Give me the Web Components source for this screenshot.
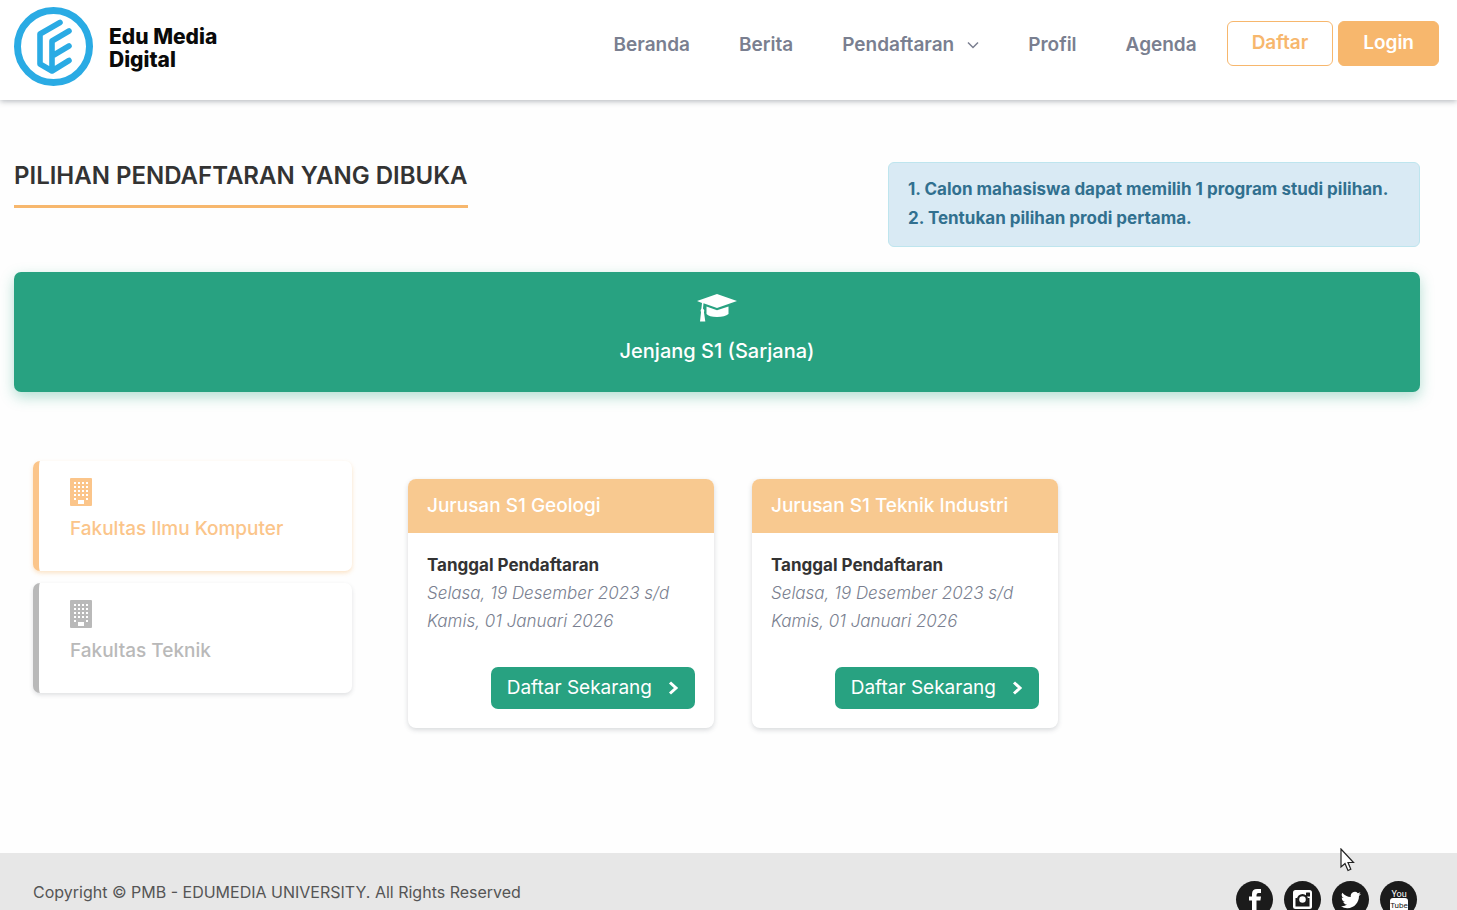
<!DOCTYPE html>
<html lang="id">
<head>
<meta charset="utf-8">
<meta name="viewport" content="width=device-width, initial-scale=1">
<title>Pilihan Pendaftaran - Edu Media Digital</title>
<style>
  :root {
    --orange: #f7b76d;
    --orange-soft: #f8c990;
    --green: #28a281;
    --ink: #333333;
    --muted: #7a7f90;
  }
  body {
    margin: 0;
    background: #fefefe;
    color: var(--ink);
    font-family: Inter, "Open Sans", sans-serif;
    font-size: 16px;
    line-height: 28px;
  }
</style>
</head>
<body>
<pmb-page></pmb-page>

<script>
const define = (name, html) => {
  const template = document.createElement('template');
  template.innerHTML = html;
  customElements.define(name, class extends HTMLElement {
    constructor() {
      super();
      this.attachShadow({ mode: 'open' }).append(template.content.cloneNode(true));
    }
  });
};

define('pmb-logo', `
<style>
  :host { display: block; }
  a { display: flex; align-items: center; gap: 16px; color: #0a0a0a; text-decoration: none; }
  svg { display: block; }
  span { padding-top: 2px; font-size: 21px; font-weight: 800; line-height: 23px; }
</style>
<a href="#">
  <svg width="79" height="79" viewBox="0 0 79 79" fill="none" stroke="#2aabe4" stroke-linecap="round" stroke-linejoin="round" aria-hidden="true">
    <circle cx="39.5" cy="39.5" r="36" stroke-width="7"/>
    <path d="M46 15.500 26 27V57L38 64 55 53.500M55 24 38 34V62M55 39 39 48.500" stroke-width="5.600"/>
  </svg>
  <span>Edu Media<br>Digital</span>
</a>`);

define('nav-link', `
<style>
  :host { display: block; }
  a { display: flex; align-items: center; gap: 13px; color: var(--muted); font-size: 19px; font-weight: 600; text-decoration: none; }
</style>
<a href="#"><slot></slot><slot name="icon"></slot></a>`);

define('auth-link', `
<style>
  :host { display: block; }
  a { display: block; box-sizing: border-box; height: 45px; padding: 0 24px; border: 1px solid var(--orange); border-radius: 6px; font-size: 19px; font-weight: 600; line-height: 42px; text-decoration: none; color: var(--orange); }
  :host([filled]) a { background: var(--orange); color: #fff; }
</style>
<a href="#"><slot></slot></a>`);

define('pmb-header', `
<style>
  :host { display: block; background: #fff; box-shadow: 0 1px 6px rgba(50, 60, 75, .4); }
  header { display: flex; justify-content: space-between; align-items: flex-start; box-sizing: border-box; height: 100px; padding: 7px 18px 0 14px; }
  .right { display: flex; align-items: center; gap: 30px; padding-top: 14px; }
  nav { display: flex; gap: 49px; padding-top: 2px; }
  .auth { display: flex; gap: 5px; }
</style>
<header>
  <pmb-logo></pmb-logo>
  <div class="right">
    <nav aria-label="Utama">
      <nav-link>Beranda</nav-link>
      <nav-link>Berita</nav-link>
      <nav-link>Pendaftaran
        <svg slot="icon" width="12" height="8" viewBox="0 0 12 8" fill="none" stroke="currentColor" stroke-width="1.500" aria-hidden="true"><path d="M1 1.500 6 6.500 11 1.500"/></svg>
      </nav-link>
      <nav-link>Profil</nav-link>
      <nav-link>Agenda</nav-link>
    </nav>
    <div class="auth">
      <auth-link>Daftar</auth-link>
      <auth-link filled>Login</auth-link>
    </div>
  </div>
</header>`);

define('notice-box', `
<style>
  :host { display: block; box-sizing: border-box; min-width: 532px; padding: 12px 19px 13px; border: 1px solid #bee5ee; border-radius: 6px; background: #d9eaf4; color: #31708f; font-size: 17px; font-weight: 700; line-height: 29px; }
</style>
<slot></slot>`);

define('level-banner', `
<style>
  :host { display: block; }
  button { display: flex; flex-direction: column; align-items: center; gap: 15px; box-sizing: border-box; width: 100%; height: 120px; padding: 22px 0 0; border: 0; border-radius: 7px; background: var(--green); box-shadow: 0 5px 14px rgba(40, 162, 129, .35); color: #fff; font: 500 20px/28px Inter, "Open Sans", sans-serif; }
</style>
<button type="button">
  <svg width="40" height="28" viewBox="0 0 40 28" fill="currentColor" aria-hidden="true">
    <path d="M20 0 40 7 20 14 6.500 9.300 6 14.500Q8 16 7 18.500L8.300 27.500H3L4 18.500Q3 16 4.400 14.500L5 9 0 7Z"/>
    <path d="M9.500 12.600 20 16.200 31.500 12.600V20Q28 23 20 23T9.500 20Z"/>
  </svg>
  <span><slot></slot></span>
</button>`);

define('faculty-card', `
<style>
  :host { display: block; --tone: #b9b9b9; --glow: rgba(60, 70, 80, .16); }
  :host([active]) { --tone: #fbc58a; --glow: rgba(247, 183, 109, .38); }
  button { display: flex; flex-direction: column; align-items: flex-start; gap: 9px; box-sizing: border-box; width: 100%; height: 110px; padding: 17px 16px 0 31px; border: 0; border-left: 6px solid var(--tone); border-radius: 7px; background: #fff; box-shadow: 0 2px 4px var(--glow); color: var(--tone); font: 500 19px/28px Inter, "Open Sans", sans-serif; text-align: left; }
</style>
<button type="button">
  <svg width="22" height="28" viewBox="0 0 22 28" aria-hidden="true">
    <rect width="22" height="28" rx="1" fill="currentColor"/>
    <path d="M4 5H18M4 9H18M4 13H18M4 17H18" stroke="#fff" stroke-width="2" stroke-dasharray="2 2"/>
    <path d="M4 20h2v2H4zM16 20h2v2h-2zM8 22h6v4H8z" fill="#fff"/>
  </svg>
  <span><slot></slot></span>
</button>`);

define('program-card', `
<style>
  :host { display: block; border-radius: 8px; background: #fff; box-shadow: 0 2px 5px rgba(60, 70, 80, .2); overflow: hidden; }
  h2 { margin: 0; padding: 0 19px; background: var(--orange-soft); color: #fff; font-size: 19px; font-weight: 500; line-height: 54px; }
  .body { padding: 18px 19px 19px; }
  strong, em { display: block; }
  strong { font-size: 17px; }
  em { color: var(--muted); font-size: 17px; font-weight: 300; }
  .action { display: flex; justify-content: flex-end; padding-top: 32px; }
  a { display: flex; align-items: center; gap: 16px; height: 42px; padding: 0 16px; border-radius: 7px; background: var(--green); color: #fff; font-size: 19px; line-height: 40px; text-decoration: none; white-space: nowrap; }
</style>
<h2><slot></slot></h2>
<div class="body">
  <strong>Tanggal Pendaftaran</strong>
  <em><slot name="from"></slot></em>
  <em><slot name="until"></slot></em>
  <div class="action">
    <a href="#">Daftar Sekarang
      <svg width="11" height="14" viewBox="0 0 11 14" fill="none" stroke="currentColor" stroke-width="3" aria-hidden="true"><path d="M2 1.500 8 7 2 12.500"/></svg>
    </a>
  </div>
</div>`);

define('social-link', `
<style>
  :host { display: block; }
  a { display: grid; place-items: center; width: 37px; height: 37px; border-radius: 50%; background: #1b1b1b; color: #fff; }
  ::slotted(svg) { display: block; }
</style>
<a href="#"><slot></slot></a>`);

define('pmb-footer', `
<style>
  :host { display: block; position: relative; background: #e7e7e7; color: #555; }
  footer { display: flex; justify-content: space-between; align-items: flex-start; padding: 28px 40px 28px 33px; }
  p { margin: 0; line-height: 22px; }
  .social { display: flex; gap: 11px; }
  .pointer { position: absolute; right: 101px; top: -5px; }
</style>
<footer>
  <p>Copyright © PMB - EDUMEDIA UNIVERSITY. All Rights Reserved</p>
  <div class="social">
    <social-link><svg width="37" height="37" viewBox="0 0 37 37" fill="#fff" role="img" aria-label="Facebook"><path d="M16 29V19.500H13V15.500H16V13Q16 8 21 8H25V12H22.500Q20.500 12 20.500 14V15.500H25L24.400 19.500H20.500V29Z"/></svg></social-link>
    <social-link><svg width="37" height="37" viewBox="0 0 37 37" role="img" aria-label="Instagram"><rect x="9" y="9" width="19" height="19" rx="2.500" fill="#fff"/><path d="M11.500 17V25.500H25.500V17H23.500A5.200 5.200 0 1 1 13.500 17Z" fill="#1b1b1b"/><rect x="22" y="11.500" width="4" height="4" rx=".5" fill="#1b1b1b"/><circle cx="18.500" cy="18.500" r="4.400" fill="#fff" stroke="#1b1b1b" stroke-width="2.200"/></svg></social-link>
    <social-link><svg width="20" height="20" viewBox="0 0 24 24" fill="#fff" role="img" aria-label="Twitter"><path d="M23.950 4.570a10 10 0 0 1-2.820.770 4.960 4.960 0 0 0 2.160-2.720c-.950.560-2 .960-3.120 1.190a4.920 4.920 0 0 0-8.390 4.480C7.690 8.100 4.070 6.130 1.640 3.160a4.920 4.920 0 0 0 1.520 6.570 4.900 4.900 0 0 1-2.230-.610v.060a4.920 4.920 0 0 0 3.950 4.830 5 5 0 0 1-2.210.080 4.940 4.940 0 0 0 4.600 3.420A9.870 9.870 0 0 1 0 19.540a13.990 13.990 0 0 0 7.550 2.210c9.050 0 14-7.500 14-13.990 0-.210 0-.420-.020-.630a9.940 9.940 0 0 0 2.460-2.550z"/></svg></social-link>
    <social-link><svg width="37" height="37" viewBox="0 0 37 37" font-family="Roboto, sans-serif" text-anchor="middle" role="img" aria-label="YouTube"><text x="19" y="16" font-size="9" fill="#fff">You</text><rect x="10" y="17" width="18" height="14" rx="3" fill="#fff"/><text x="19" y="27" font-size="8" fill="#1b1b1b">Tube</text></svg></social-link>
  </div>
</footer>
<svg class="pointer" width="16" height="24" viewBox="0 0 16 24" fill="#fff" stroke="#222" stroke-width="1.200" aria-hidden="true"><path d="M1 1V19L5 15.500 8 22.500 10.800 21.300 8 14.500H13.500Z"/></svg>`);

define('pmb-page', `
<style>
  :host { display: block; }
  main { padding: 62px 37px 125px 14px; }
  .intro { display: flex; justify-content: space-between; align-items: flex-start; gap: 24px; margin-bottom: 25px; }
  h1 { margin: 0; padding-bottom: 15px; border-bottom: 3px solid var(--orange); font-size: 24px; font-weight: 600; line-height: 28px; }
  .columns { display: grid; grid-template-columns: 319px 1fr; gap: 56px; padding: 69px 18px 0 19px; }
  .faculties { display: grid; gap: 12px; align-content: start; }
  .programs { display: grid; grid-template-columns: repeat(3, 1fr); gap: 38px; align-items: start; padding-top: 18px; }
  p { margin: 0; }
</style>
<pmb-header></pmb-header>
<main>
  <div class="intro">
    <h1>PILIHAN PENDAFTARAN YANG DIBUKA</h1>
    <notice-box>
      <p>1. Calon mahasiswa dapat memilih 1 program studi pilihan.</p>
      <p>2. Tentukan pilihan prodi pertama.</p>
    </notice-box>
  </div>
  <level-banner>Jenjang S1 (Sarjana)</level-banner>
  <div class="columns">
    <div class="faculties">
      <faculty-card active>Fakultas Ilmu Komputer</faculty-card>
      <faculty-card>Fakultas Teknik</faculty-card>
    </div>
    <div class="programs">
      <program-card>Jurusan S1 Geologi<span slot="from">Selasa, 19 Desember 2023 s/d</span><span slot="until">Kamis, 01 Januari 2026</span></program-card>
      <program-card>Jurusan S1 Teknik Industri<span slot="from">Selasa, 19 Desember 2023 s/d</span><span slot="until">Kamis, 01 Januari 2026</span></program-card>
    </div>
  </div>
</main>
<pmb-footer></pmb-footer>`);
</script>
</body>
</html>
